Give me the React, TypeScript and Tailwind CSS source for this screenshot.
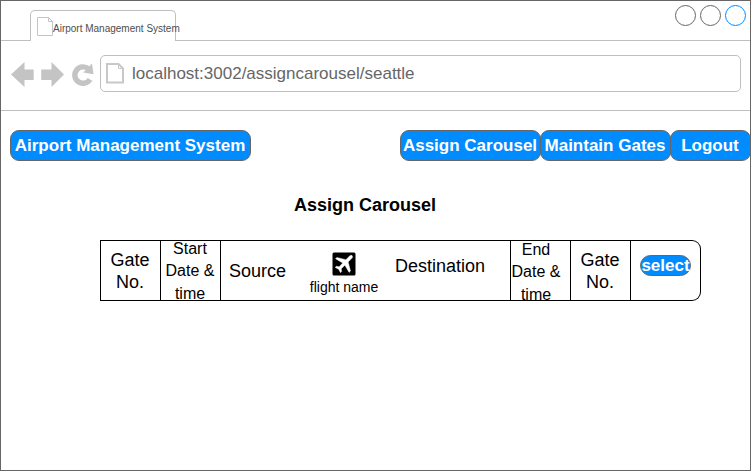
import React from "react";

const PageIcon = ({ w, h, d, fold, stroke, sw }: { w: number; h: number; d: string; fold: string; stroke: string; sw: number }) => (
  <svg width={w} height={h} viewBox={`0 0 ${w} ${h}`} fill="none" stroke={stroke} strokeWidth={sw} className="shrink-0">
    <path d={d} />
    <path d={fold} strokeWidth={1} />
  </svg>
);

const NavButton = ({ label, className }: { label: string; className: string }) => (
  <button
    className={`flex h-[31px] shrink-0 items-center justify-center whitespace-nowrap rounded-[9px] border border-[#666] bg-[#008cff] pr-px text-[17px] font-bold leading-[29px] text-white ${className}`}
  >
    {label}
  </button>
);

const Gate = () => (
  <div className="flex w-[60px] flex-col justify-center border-l border-black pr-px pt-px text-center text-[18px] leading-[22px]">
    <span>Gate</span>
    <span>No.</span>
  </div>
);

const DateCell = ({ label, className }: { label: string; className: string }) => (
  <div className={`flex h-[59px] w-[60px] flex-col items-center justify-center whitespace-nowrap border-l border-black text-[16px] leading-[22.4px] ${className}`}>
    <span>{label}</span>
    <span>Date &amp;</span>
    <span>time</span>
  </div>
);

export default function App() {
  return (
    <div className="flex h-[471px] w-[751px] flex-col overflow-hidden border border-[#666] bg-white font-['Liberation_Sans',Arial,sans-serif] text-black">
      <header className="flex h-[40px] items-end justify-between border-b border-[#bfbfbf]">
        <div className="-mb-px ml-[29px] mt-[9px] flex h-[31px] w-[146px] items-start rounded-t-[5px] border border-b-0 border-[#bfbfbf] bg-white pl-[6px] pt-[6px]">
          <PageIcon w={17} h={19} d="M.5 .5H11.5L15.5 4.5V18.5H.5Z" fold="M11.5 .5V4.5H15.5" stroke="#c4c4c4" sw={1} />
          <span className="-ml-px mt-[5px] whitespace-nowrap text-[10px] leading-[14px] text-[#4d4d4d]">Airport Management System</span>
        </div>
        <div className="mr-[4px] flex gap-[4px] self-start pt-[4px]">
          <span className="h-[21px] w-[21px] rounded-full border border-[#666]" />
          <span className="h-[21px] w-[21px] rounded-full border border-[#666]" />
          <span className="h-[21px] w-[21px] rounded-full border border-[#008cff]" />
        </div>
      </header>

      <div className="flex h-[70px] shrink-0 items-start border-b border-[#bfbfbf] pt-[14px]">
        <svg width="88" height="28" viewBox="10 60 88 28" fill="#c4c4c4" className="ml-[9px] mt-[5px] shrink-0">
          <path d="M11 74.5L24.5 62V69.5H33.7V80H24.5V87Z" />
          <path d="M64 74.5L51.5 62V69.5H41.2V80H51.5V87Z" />
          <path d="M90 79.4A8.2 8.2 0 1 1 88.6 69.1" fill="none" stroke="#c4c4c4" strokeWidth="5.4" />
          <path d="M92 63.5L93.5 74.2L83.2 72.4Z" />
        </svg>
        <div className="ml-[2px] flex h-[37px] w-[641px] items-start rounded-[5px] border border-[#bfbfbf] pl-[5px] pt-[7px]">
          <PageIcon w={19} h={21} d="M1 1H12.5L17 5.5V19.5H1Z" fold="M12.5 1V5.5H17" stroke="#c8c8c8" sw={2} />
          <span className="ml-[7px] text-[17px] leading-[21px] text-[#666]">localhost:3002/assigncarousel/seattle</span>
        </div>
      </div>

      <nav className="mt-[19px] flex w-[750px] justify-between pl-[9px]">
        <NavButton label="Airport Management System" className="w-[241px]" />
        <div className="flex">
          <NavButton label="Assign Carousel" className="w-[141px]" />
          <NavButton label="Maintain Gates" className="-ml-px w-[131px]" />
          <NavButton label="Logout" className="-ml-px w-[81px]" />
        </div>
      </nav>

      <main>
        <h1 className="ml-[264px] mt-[33px] w-[200px] text-center text-[18px] font-bold leading-[22px]">Assign Carousel</h1>
        <section className="ml-[99px] mt-[24px] flex h-[61px] w-[601px] rounded-r-[9px] border border-l-0 border-black">
          <Gate />
          <DateCell label="Start" className="pr-px pt-[2px]" />
          <div className="flex w-[290px] items-start border-l border-black">
            <span className="ml-[8px] mt-[19px] text-[18px] leading-[22px]">Source</span>
            <div className="ml-[23px] mt-[11px] flex w-[70px] flex-col items-center">
              <svg width="24" height="24" viewBox="0 0 24 24">
                <rect x=".5" y=".5" width="23" height="23" rx="1.5" fill="#000" />
                <path
                  d="M20.2 3.7C19.4 2.9 18.1 3.5 17.3 4.3L13.9 7.7L4.9 5.4L3.5 6.8L10.7 11L7.2 14.7L4.3 14.3L3.2 15.4L6.6 17.3L8.5 20.7L9.6 19.6L9.3 16.7L12.9 13.2L17.1 20.4L18.5 19L16.2 10L19.6 6.6C20.4 5.8 21 4.5 20.2 3.7Z"
                  fill="#fff"
                  stroke="#fff"
                  strokeWidth=".4"
                  strokeLinejoin="round"
                />
              </svg>
              <span className="mt-[3px] whitespace-nowrap text-[14px] leading-[17px]">flight name</span>
            </div>
            <span className="ml-[16px] mt-[14px] text-[18px] leading-[22px]">Destination</span>
          </div>
          <DateCell label="End" className="pr-[9px] pt-[4px]" />
          <Gate />
          <div className="flex flex-1 items-start border-l border-black pl-[9px] pt-[14px]">
            <button className="flex h-[21px] w-[51px] items-center justify-center rounded-full border border-[#666] bg-[#008cff] text-[17px] font-bold leading-[19px] text-white">
              select
            </button>
          </div>
        </section>
      </main>
    </div>
  );
}
